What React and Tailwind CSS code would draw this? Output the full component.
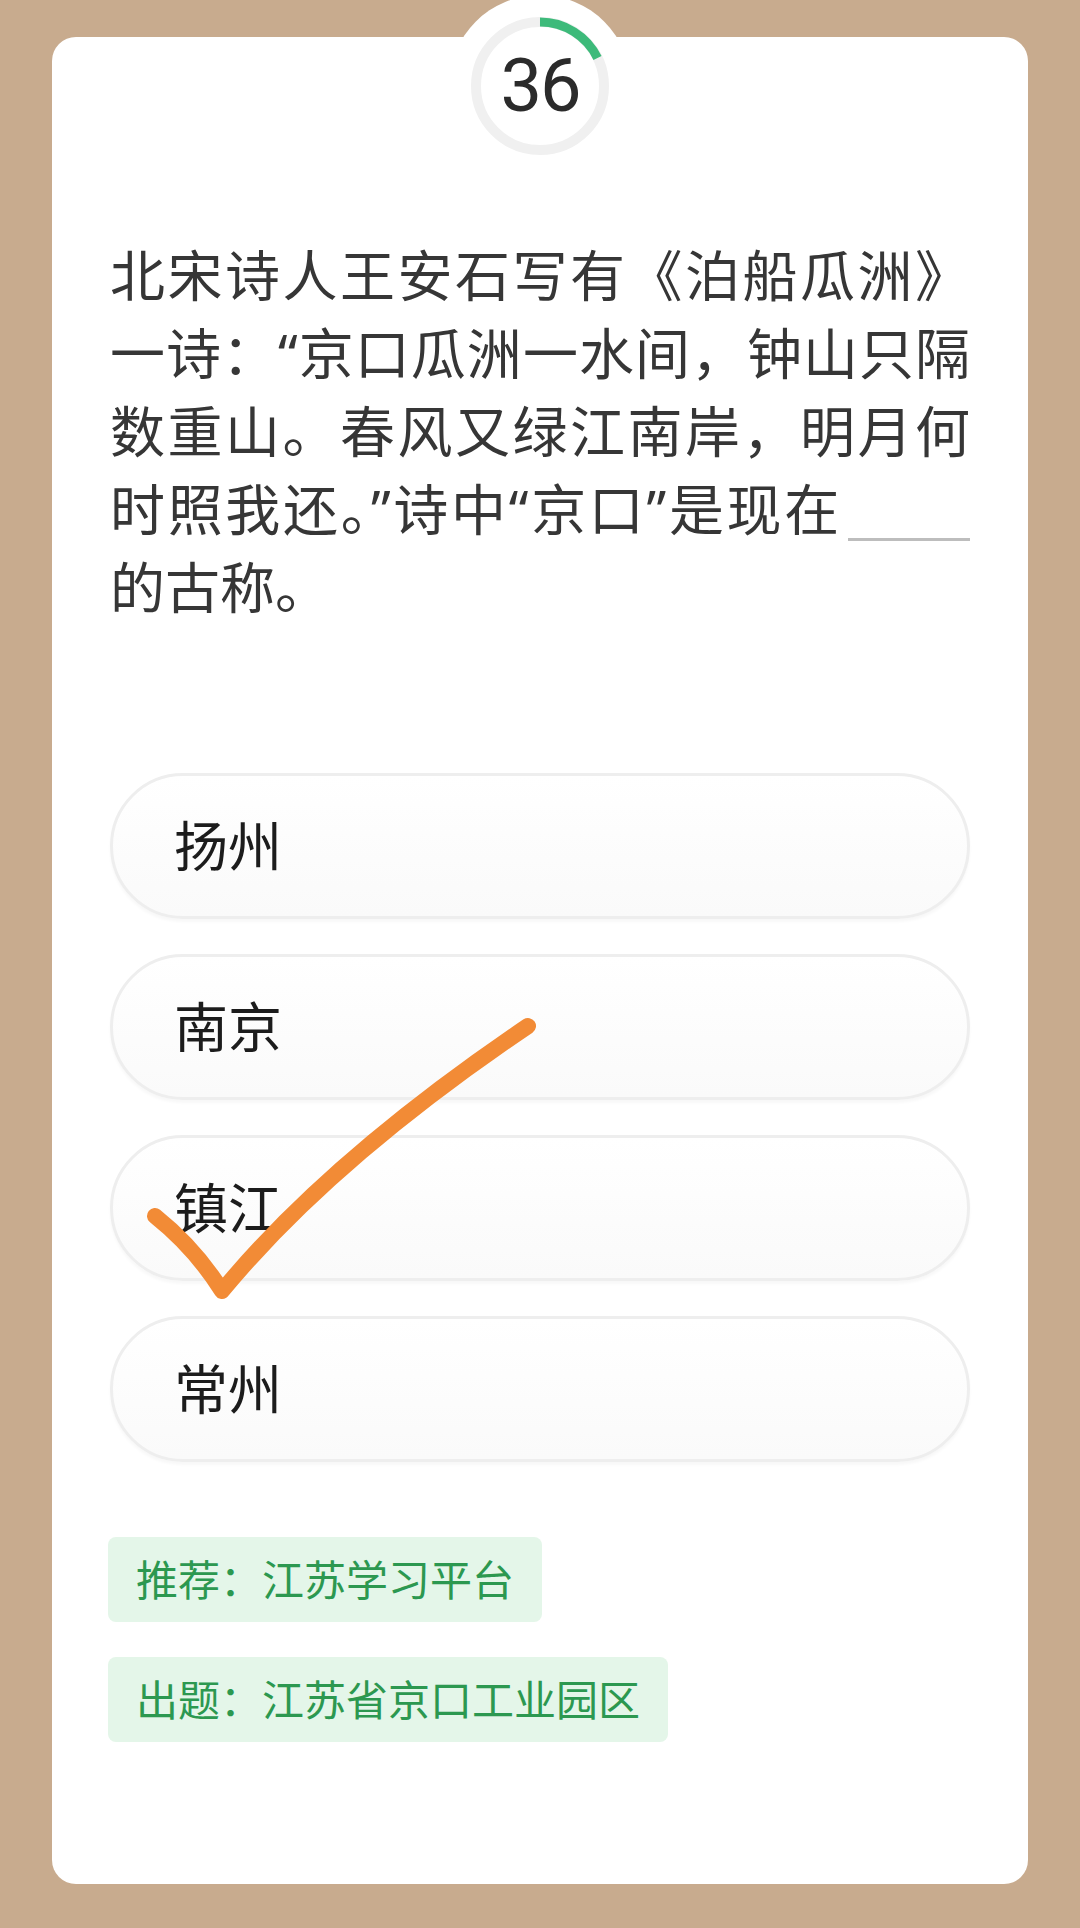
import React from "react";

const cjk = { fontFamily: '"Noto Sans", "Noto Sans CJK SC", sans-serif' };

const lines = [
  "北宋诗人王安石写有《泊船瓜洲》",
  "一诗：“京口瓜洲一水间，钟山只隔",
  "数重山。春风又绿江南岸，明月何",
];

const options = ["扬州", "南京", "镇江", "常州"];

// progress ring at the top of the card
const Timer = () => (
  <div className="absolute left-1/2 -translate-x-1/2 top-[-43px] w-[184px] h-[184px]">
    <svg width="184" height="184" viewBox="0 0 184 184" className="absolute inset-0">
      <circle cx="92" cy="92" r="91" fill="#ffffff" />
      <circle cx="92" cy="92" r="64" fill="none" stroke="#f0f0f0" strokeWidth="10" />
      <path d="M 92 28 A 64 64 0 0 1 149.5 63.9" fill="none" stroke="#3dba7a" strokeWidth="9" />
    </svg>
    <div
      className="absolute inset-0 flex items-center justify-center text-[74px] text-[#2b2b2b] leading-none tracking-[-2px]"
      style={{ fontFamily: "Roboto, sans-serif" }}
    >
      36
    </div>
  </div>
);

const Option = ({ label }) => (
  <div className="h-[146px] rounded-full border-[3px] border-[#eeeeee] bg-gradient-to-b from-white to-[#fafafa] shadow-[0_3px_3px_rgba(0,0,0,0.03)] flex items-center pl-[61px]">
    <span className="text-[54px] text-[#1c1c1c] leading-none" style={cjk}>
      {label}
    </span>
  </div>
);

const Tag = ({ children }) => (
  <div
    className="h-[85px] px-[28px] rounded-[8px] bg-[#e4f6e9] text-[#2c9850] text-[42px] flex items-center leading-none"
    style={cjk}
  >
    {children}
  </div>
);

export default function App() {
  return (
    <div className="relative w-[1080px] h-[1928px] overflow-hidden bg-[#c8ab8e] pt-[37px] px-[52px]">
      <div className="relative h-[1847px] rounded-[24px] bg-white px-[58px] pt-[199px]">
        <Timer />

        {/* Question */}
        <div className="w-[860px] text-[55px] leading-[78px] text-[#363636]" style={cjk}>
          {lines.map((l) => (
            <div key={l} className="whitespace-nowrap text-justify [text-align-last:justify]">
              {l}
            </div>
          ))}
          <div className="whitespace-nowrap text-justify [text-align-last:justify]">
            时照我还。”诗中“京口”是现在
            <span className="inline-block w-[122px] h-0 border-b-[3px] border-[#bdbdbd] relative top-[11px] ml-[6px]" />
          </div>
          <div className="whitespace-nowrap">的古称。</div>
        </div>

        {/* Options */}
        <div className="mt-[147px] flex flex-col gap-[35px]">
          {options.map((o) => (
            <Option key={o} label={o} />
          ))}
        </div>

        {/* Tags */}
        <div className="mt-[75px] flex flex-col items-start gap-[35px] -ml-[2px]">
          <Tag>推荐：江苏学习平台</Tag>
          <Tag>出题：江苏省京口工业园区</Tag>
        </div>
      </div>

      {/* Hand-drawn check mark */}
      <svg
        className="absolute inset-0 pointer-events-none"
        width="1080"
        height="1928"
        viewBox="0 0 1080 1928"
      >
        <path
          d="M 155 1216 Q 195 1248 222 1291 Q 330 1160 528 1026"
          fill="none"
          stroke="#f28b36"
          strokeWidth="16"
          strokeLinecap="round"
          strokeLinejoin="round"
        />
      </svg>
    </div>
  );
}
